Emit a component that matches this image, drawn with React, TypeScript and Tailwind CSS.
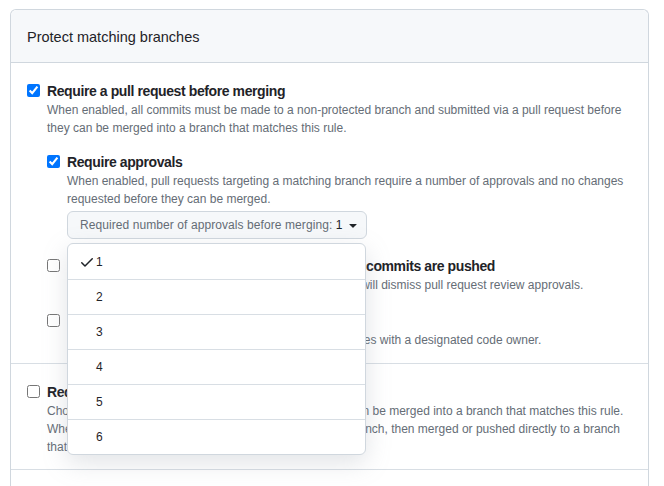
import React from 'react';

const font = { fontFamily: '"Liberation Sans", Arial, sans-serif' };

function Check() {
  return (
    <svg viewBox="0 0 16 16" width="16" height="16" fill="currentColor" className="text-[#1f2328]">
      <path d="M13.78 4.22a.75.75 0 0 1 0 1.06l-7.25 7.25a.75.75 0 0 1-1.06 0L2.22 9.28a.751.751 0 0 1 .018-1.042.751.751 0 0 1 1.042-.018L6 10.94l6.72-6.72a.75.75 0 0 1 1.06 0Z" />
    </svg>
  );
}

function Caret() {
  return (
    <svg viewBox="0 0 16 16" width="16" height="16" fill="currentColor" className="text-[#1f2328]">
      <path d="m4.427 7.427 3.396 3.396a.25.25 0 0 0 .354 0l3.396-3.396A.25.25 0 0 0 11.396 7H4.604a.25.25 0 0 0-.177.427Z" />
    </svg>
  );
}

function Option({ label, desc, checked, children, className = '' }: {
  label: string; desc: string; checked?: boolean; children?: React.ReactNode; className?: string;
}) {
  return (
    <div className={'flex ' + className}>
      <input type="checkbox" defaultChecked={checked} className="mt-[3px] ml-0 mr-[7px] w-[13px] h-[13px] shrink-0" />
      <div className="min-w-0">
        <div className="text-[14px] leading-[20px] font-bold tracking-[-0.4px] text-[#1f2328]">{label}</div>
        <div className="text-[12px] leading-[18px] text-[#656d76]">{desc}</div>
        {children}
      </div>
    </div>
  );
}

export default function App() {
  const counts = [1, 2, 3, 4, 5, 6];
  return (
    <div style={font} className="bg-white min-h-[486px] pt-[9px] overflow-hidden">
      <div className="ml-[10px] w-[639px] border border-[#d0d7de] rounded-t-[6px] border-b-0">
        <div className="bg-[#f6f8fa] border-b border-[#d0d7de] rounded-t-[6px] px-4 pt-[3px] h-[53px] flex items-center">
          <h2 className="text-[14.5px] font-normal text-[#1f2328]">Protect matching branches</h2>
        </div>

        <div className="px-4 pt-[18px] pb-[14px] border-b border-[#d8dee4]">
          <Option
            checked
            label="Require a pull request before merging"
            desc="When enabled, all commits must be made to a non-protected branch and submitted via a pull request before they can be merged into a branch that matches this rule."
          >
            <Option
              checked
              className="mt-[15px]"
              label="Require approvals"
              desc="When enabled, pull requests targeting a matching branch require a number of approvals and no changes requested before they can be merged."
            >
              <div className="relative mt-[3px]">
                <button className="h-[28px] pl-3 pr-[5px] flex items-center bg-[#f6f8fa] border border-[#d0d7de] rounded-[6px] text-[12px] text-[#656d76] font-medium tracking-[0.08px]">
                  Required number of approvals before merging:&nbsp;<span className="text-[#1f2328] mr-[2px]">1</span>
                  <Caret />
                </button>
                <div className="absolute z-10 left-0 top-[32px] w-[299px] bg-white border border-[#d0d7de] rounded-[6px] shadow-[0_8px_24px_rgba(140,149,159,0.25)] overflow-hidden">
                  {counts.map((n, i) => (
                    <div key={n} className={'h-[35px] flex items-center pl-[11px] gap-[1px] text-[12px] text-[#1f2328] ' + (i > 0 ? 'border-t border-[#d8dee4]' : '')}>
                      <span className="w-4 h-4 flex items-center">{n === 1 && <Check />}</span>
                      <span>{n}</span>
                    </div>
                  ))}
                </div>
              </div>
            </Option>
            <Option
              className="mt-[17px]"
              label="Dismiss stale pull request approvals when new commits are pushed"
              desc="New reviewable commits pushed to a matching branch will dismiss pull request review approvals."
            />
            <Option
              className="mt-[17px]"
              label="Require review from Code Owners"
              desc="Require an approved review in pull requests including files with a designated code owner."
            />
          </Option>
        </div>

        <div className="px-4 pt-[18px] pb-[13px] border-b border-[#d8dee4]">
          <Option
            label="Require status checks to pass before merging"
            desc="Choose which status checks must pass before branches can be merged into a branch that matches this rule. When enabled, commits must first be pushed to another branch, then merged or pushed directly to a branch that matches this rule after status checks have passed."
          />
        </div>
        <div className="h-[40px]" />
      </div>
    </div>
  );
}
